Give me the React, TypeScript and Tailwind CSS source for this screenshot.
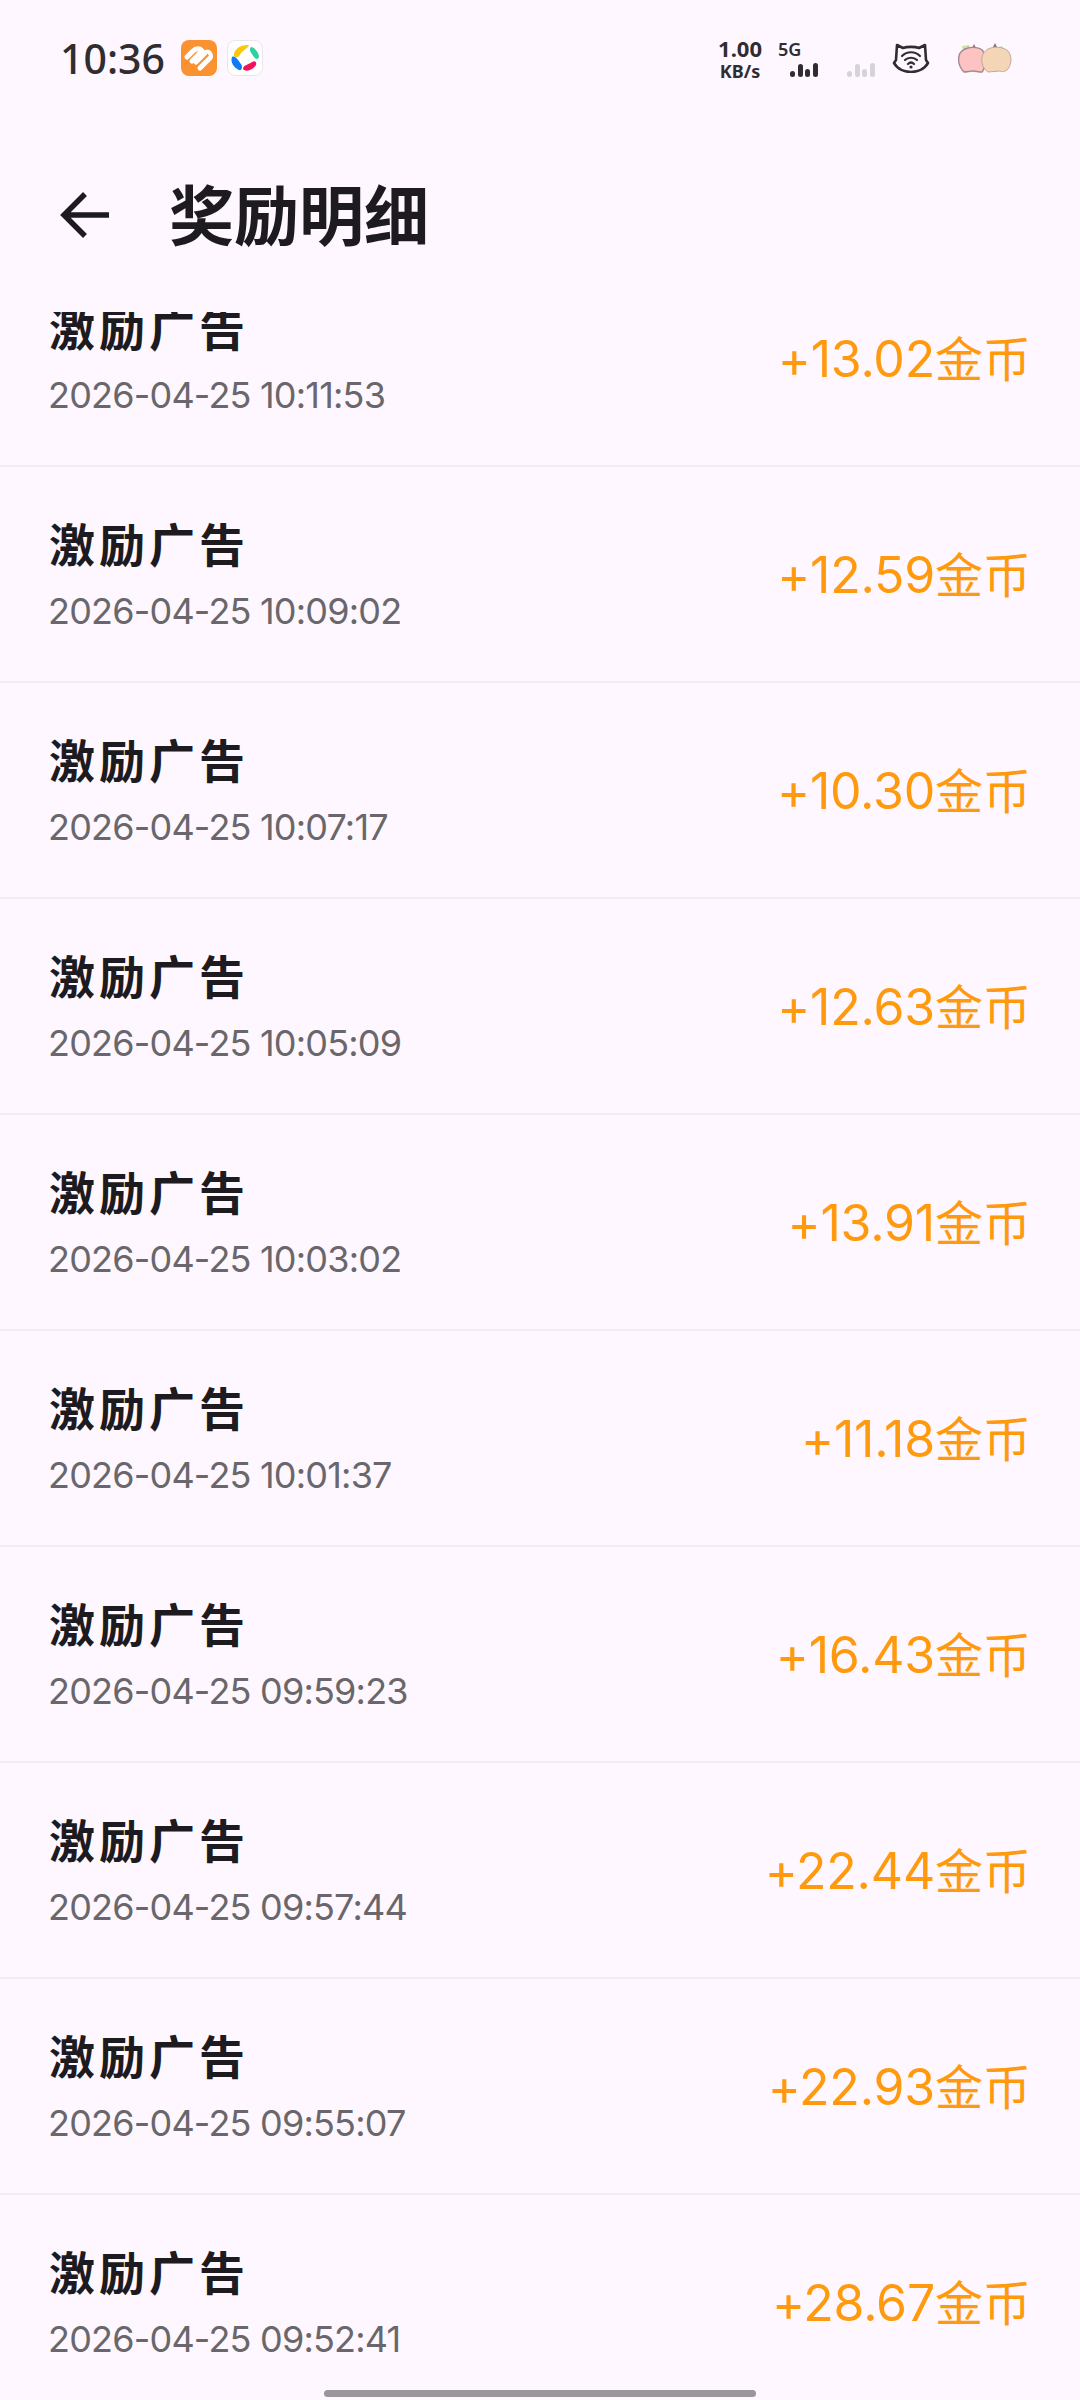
const records = [
  { time: "2026-04-25 10:11:53", amount: "+13.02" },
  { time: "2026-04-25 10:09:02", amount: "+12.59" },
  { time: "2026-04-25 10:07:17", amount: "+10.30" },
  { time: "2026-04-25 10:05:09", amount: "+12.63" },
  { time: "2026-04-25 10:03:02", amount: "+13.91" },
  { time: "2026-04-25 10:01:37", amount: "+11.18" },
  { time: "2026-04-25 09:59:23", amount: "+16.43" },
  { time: "2026-04-25 09:57:44", amount: "+22.44" },
  { time: "2026-04-25 09:55:07", amount: "+22.93" },
  { time: "2026-04-25 09:52:41", amount: "+28.67" },
];

function Bars({ className }: { className: string }) {
  return (
    <svg width="28" height="14" viewBox="0 0 28 14" className={className}>
      <rect x="0" y="8" width="5" height="6" rx="2.5" />
      <rect x="8" y="1" width="5" height="13" rx="2.5" />
      <rect x="15" y="6" width="5" height="8" rx="2.5" />
      <rect x="23" y="0" width="5" height="14" rx="2.5" />
    </svg>
  );
}

function StatusBar() {
  return (
    <div className="flex h-[114px] items-center justify-between pl-[60px] pr-[68px] pt-[2px] text-[#2f2d30]">
      <div className="flex items-center">
        <span className="font-['Noto_Sans',sans-serif] text-[41px] font-medium leading-none">10:36</span>
        <svg width="36" height="36" viewBox="0 0 36 36" className="ml-[16px]">
          <rect width="36" height="36" rx="8" fill="#fb9232" />
          <path d="M6 17 L12 11 C15 8 19 8 21 11 L11 21" stroke="#fff" strokeWidth="5" fill="none" strokeLinecap="round" strokeLinejoin="round" />
          <path d="M15 22 L24 13 M19 28 L29 18" stroke="#fff" strokeWidth="5" strokeLinecap="round" />
          <path d="M24 13 C26 10 30 12 30 17" stroke="#fff" strokeWidth="4" fill="none" strokeLinecap="round" />
        </svg>
        <svg width="36" height="36" viewBox="0 0 36 36" className="ml-[10px]">
          <rect x="0.5" y="0.5" width="35" height="35" rx="8" fill="#fff" stroke="#e8e6ea" />
          <path d="M7 16 C6 10 13 4 22 5 C21 9 15 10 13 15 C11 18 8 18 7 16 Z" fill="#fdc80c" />
          <path d="M24 7 C27 7 32 12 32 17 C31 20 28 19 27 17 C25 14 21 10 24 7 Z" fill="#2fd0a3" />
          <path d="M5 17 C8 15 11 20 14 24 C16 27 15 31 12 30 C7 28 3 22 5 17 Z" fill="#0f7cf5" />
          <path d="M16 29 C16 25 21 25 25 22 C28 20 30 22 29 25 C27 29 19 33 16 29 Z" fill="#f4115a" />
        </svg>
      </div>
      <div className="flex items-center">
        <div className="flex flex-col items-center font-['Noto_Sans',sans-serif] font-bold leading-none">
          <span className="text-[22px]">1.00</span>
          <span className="mt-[3px] text-[18px]">KB/s</span>
        </div>
        <div className="ml-[16px] flex w-[40px] flex-col">
          <span className="font-['Noto_Sans',sans-serif] text-[18px] font-semibold leading-none">5G</span>
          <Bars className="ml-[12px] mt-[5px] fill-[#2f2d30]" />
        </div>
        <Bars className="ml-[29px] mt-[24px] fill-[#d5d3d7]" />
        <svg width="38" height="30" viewBox="0 0 38 30" fill="none" stroke="#2f2d30" className="ml-[17px]">
          <path d="M5 2 L11 5 C15 3.5 23 3.5 27 5 L33 2 L34 17 L36 20 C32 27 24 29 19 29 C14 29 6 27 2 20 L4 17 Z" strokeWidth="2.6" strokeLinejoin="round" />
          <path d="M10 13 C15 8 23 8 28 13 M13 17 C16 14 22 14 25 17 M16 21 C18 19 20 19 22 21" strokeWidth="2.2" strokeLinecap="round" />
          <circle cx="19" cy="24" r="1.6" fill="#2f2d30" stroke="none" />
        </svg>
        <svg width="54" height="30" viewBox="0 0 54 30" className="ml-[28px]">
          <path d="M4 3 L11 2 L13 6 L5 7 Z" fill="#cfe2a5" />
          <path d="M38 5 L44 3 L47 7 L40 8 Z" fill="#cfe2a5" />
          <path d="M16 1 L18 5 L14 5 Z M37 0 L39 4 L35 4 Z" fill="#8e7176" />
          <path d="M10 5 C14 4 22 4 25 8 C28 14 27 26 24 29 C20 29 18 28 15 28 C12 28 9 29 6 29 C1 24 0 18 1 13 C2 8 6 6 10 5 Z" fill="#fdc3c3" stroke="#a28a8e" strokeWidth="1.4" />
          <path d="M30 6 C36 3 46 4 50 8 C54 13 54 20 50 26 C47 29 44 29 42 28 C38 28 34 29 30 29 C25 26 23 19 24 14 C25 10 27 8 30 6 Z" fill="#f4d6b6" stroke="#c0aa9c" strokeWidth="1" />
        </svg>
      </div>
    </div>
  );
}

export default function App() {
  return (
    <main className="flex h-[2400px] w-[1080px] flex-col overflow-hidden bg-[#fef7ff] font-['Inter','Noto_Sans_CJK_SC',sans-serif]">
      <StatusBar />
      {/* header */}
      <div className="flex h-[198px] shrink-0 items-start pl-[59px]">
        <svg width="50" height="48" viewBox="0 0 50 48" fill="none" stroke="#1d1b20" strokeWidth="5.5" className="mt-[77px]">
          <path d="M50 24 H5 M26 3 L5 24 L26 45" />
        </svg>
        <h1 className="ml-[60px] mt-[63px] font-['Noto_Sans_CJK_SC',sans-serif] text-[65px] font-bold leading-[70px] text-[#1d1b20]">
          奖励明细
        </h1>
      </div>
      {/* first row is scrolled partly under the header */}
      <div className="min-h-0 flex-1 overflow-hidden">
        <div className="-mt-[61px]">
          {records.map((r) => (
            <div key={r.time} className="flex h-[216px] items-center justify-between border-b-2 border-[#f0edf1] pl-[48px] pr-[49px]">
              <div className="flex flex-col">
                <span className="pl-[1px] font-['Noto_Sans_CJK_SC',sans-serif] text-[46px] font-bold leading-[60px] tracking-[4px] text-[#1d1b20]">激励广告</span>
                <span className="mt-[14px] text-[36px] leading-[50px] tracking-[-0.8px] text-[#69676b]">{r.time}</span>
              </div>
              <div className="flex items-baseline font-['Noto_Sans_CJK_SC',sans-serif] text-[48px] leading-none text-[#ff9a0e]">
                <span className="font-['Inter',sans-serif] text-[50px] tracking-[-0.2px]">{r.amount}</span>
                <span>金币</span>
              </div>
            </div>
          ))}
        </div>
      </div>
      {/* gesture bar */}
      <div className="relative h-0">
        <div className="absolute left-[324px] top-[-10px] h-[7px] w-[432px] rounded-full bg-[#98969a]" />
      </div>
    </main>
  );
}
